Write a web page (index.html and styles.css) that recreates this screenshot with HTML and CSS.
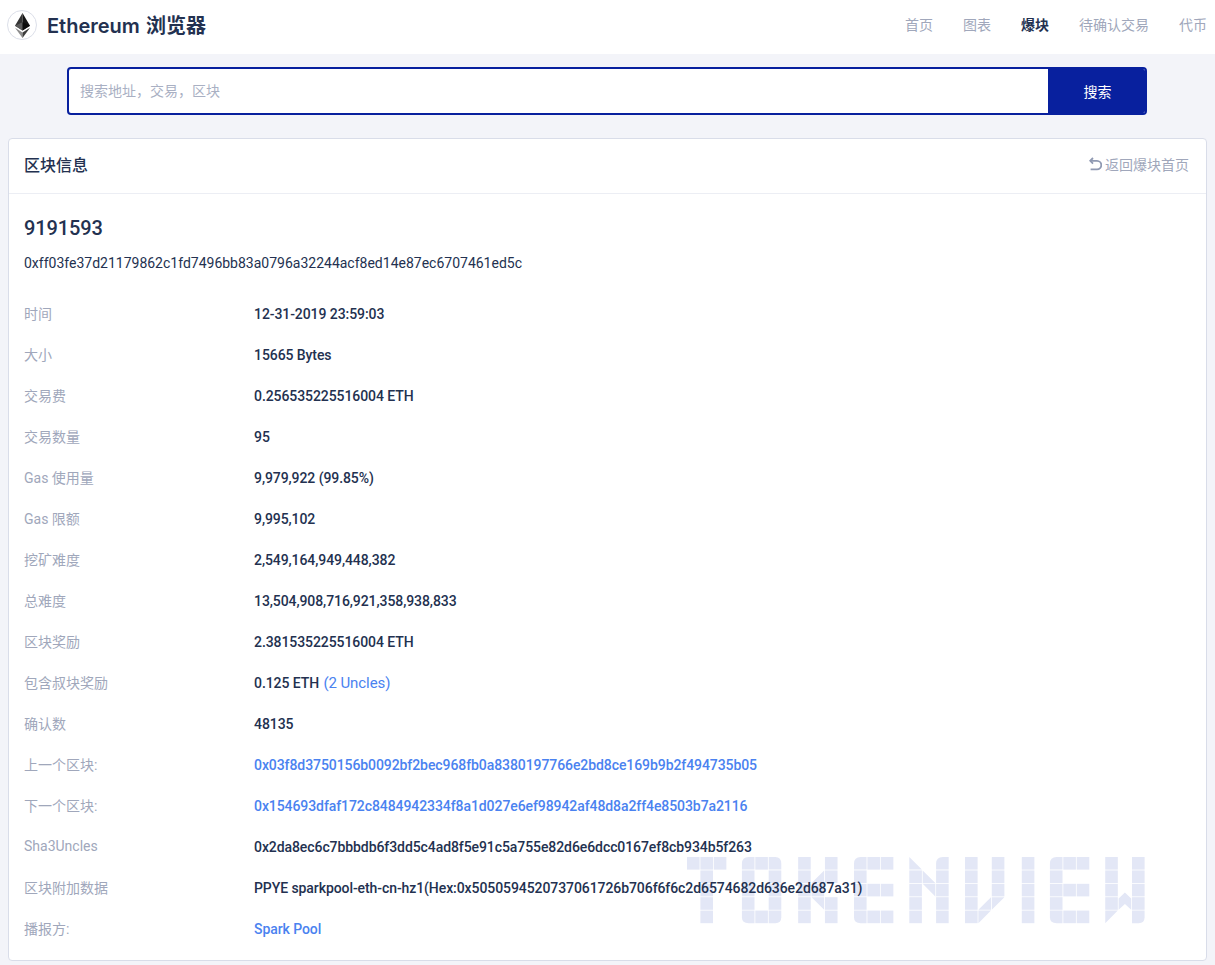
FILE: index.html
```html
<!DOCTYPE html>
<html lang="zh">
<head>
  <meta charset="UTF-8" />
  <meta name="viewport" content="width=device-width, initial-scale=1.0"/>
  <title>Ethereum 浏览器</title>
  <link rel="stylesheet" href="styles.css">
</head>
<body>
  <header class="topbar">
    <div class="brand">
      <div class="brand-logo">
        <svg width="15" height="25" viewBox="0 0 18 30">
          <path fill="#343434" d="M9 0 L0 15.2 L9 21 Z"/>
          <path fill="#141414" d="M9 0 L18 15.2 L9 21 Z"/>
          <path fill="#5a5a5a" d="M0 15.2 L9 11 L9 21 Z"/>
          <path fill="#0b0b0b" d="M18 15.2 L9 11 L9 21 Z"/>
          <path fill="#8c8c8c" d="M0 17.6 L9 30 L9 23.4 Z"/>
          <path fill="#3c3c3b" d="M18 17.6 L9 30 L9 23.4 Z"/>
        </svg>
      </div>
      <span class="brand-name">Ethereum 浏览器</span>
    </div>
    <nav class="nav">
      <a>首页</a>
      <a>图表</a>
      <a class="active">爆块</a>
      <a>待确认交易</a>
      <a>代币</a>
    </nav>
  </header>

  <div class="search">
    <div class="search-input">搜索地址，交易，区块</div>
    <button class="search-btn">搜索</button>
  </div>

  <section class="card">
    <div class="card-head">
      <h2>区块信息</h2>
      <a class="back">
        <svg width="13" height="14" viewBox="0 0 13 14" fill="none" stroke="#8f99b2" stroke-width="1.8">
          <path d="M4 1 L1.2 3.8 L4 6.6"/>
          <path d="M1.4 3.8 H8 A4.2 4.2 0 0 1 8 12.4 H1.6"/>
        </svg>
        返回爆块首页
      </a>
    </div>
    <div class="card-body">
      <div class="block-no">9191593</div>
      <div class="block-hash">0xff03fe37d21179862c1fd7496bb83a0796a32244acf8ed14e87ec6707461ed5c</div>

      <div class="rows">
        <div class="row"><span class="label">时间</span><span class="value">12-31-2019 23:59:03</span></div>
        <div class="row"><span class="label">大小</span><span class="value">15665 Bytes</span></div>
        <div class="row"><span class="label">交易费</span><span class="value">0.256535225516004 ETH</span></div>
        <div class="row"><span class="label">交易数量</span><span class="value">95</span></div>
        <div class="row"><span class="label">Gas 使用量</span><span class="value">9,979,922 (99.85%)</span></div>
        <div class="row"><span class="label">Gas 限额</span><span class="value">9,995,102</span></div>
        <div class="row"><span class="label">挖矿难度</span><span class="value">2,549,164,949,448,382</span></div>
        <div class="row"><span class="label">总难度</span><span class="value">13,504,908,716,921,358,938,833</span></div>
        <div class="row"><span class="label">区块奖励</span><span class="value">2.381535225516004 ETH</span></div>
        <div class="row"><span class="label">包含叔块奖励</span><span class="value">0.125 ETH <a class="link uncles">(2 Uncles)</a></span></div>
        <div class="row"><span class="label">确认数</span><span class="value">48135</span></div>
        <div class="row"><span class="label">上一个区块:</span><span class="value"><a class="link">0x03f8d3750156b0092bf2bec968fb0a8380197766e2bd8ce169b9b2f494735b05</a></span></div>
        <div class="row"><span class="label">下一个区块:</span><span class="value"><a class="link">0x154693dfaf172c8484942334f8a1d027e6ef98942af48d8a2ff4e8503b7a2116</a></span></div>
        <div class="row"><span class="label">Sha3Uncles</span><span class="value">0x2da8ec6c7bbbdb6f3dd5c4ad8f5e91c5a755e82d6e6dcc0167ef8cb934b5f263</span></div>
        <div class="row"><span class="label">区块附加数据</span><span class="value">PPYE sparkpool-eth-cn-hz1(Hex:0x5050594520737061726b706f6f6c2d6574682d636e2d687a31)</span></div>
        <div class="row"><span class="label">播报方:</span><span class="value"><a class="link">Spark Pool</a></span></div>
      </div>
    </div>

    <!-- watermark, sits under the text -->
    <svg class="watermark" width="458" height="67" viewBox="0 0 342 50" fill="#e3e7f6" aria-hidden="true">
      <defs>
        <rect id="c" width="9.4" height="9.4"/>
      </defs>
      <g>
        <use href="#c"/><use href="#c" x="10"/><use href="#c" x="20"/>
        <use href="#c" x="10" y="10"/><use href="#c" x="10" y="20"/><use href="#c" x="10" y="30"/><use href="#c" x="10" y="40"/>
      </g>
      <g transform="translate(41)">
        <path d="M9.4 0V9.4H0V5Q0 0 5 0Z"/><use href="#c" x="10"/><path d="M20 0H25Q29.4 0 29.4 5V9.4H20Z"/>
        <use href="#c" y="10"/><use href="#c" x="20" y="10"/>
        <use href="#c" y="20"/><use href="#c" x="20" y="20"/>
        <use href="#c" y="30"/><use href="#c" x="20" y="30"/>
        <path d="M0 40H9.4V49.4H5Q0 49.4 0 45Z"/><use href="#c" x="10" y="40"/><path d="M20 40H29.4V45Q29.4 49.4 25 49.4H20Z"/>
      </g>
      <g transform="translate(83)">
        <use href="#c"/><use href="#c" x="20"/>
        <use href="#c" y="10"/><path d="M10 19.4L19.4 10V19.4Z"/><use href="#c" x="20" y="10"/>
        <use href="#c" y="20"/><use href="#c" x="10" y="20"/>
        <use href="#c" y="30"/><path d="M10 30H19.4V39.4Z"/><use href="#c" x="20" y="30"/>
        <use href="#c" y="40"/><use href="#c" x="20" y="40"/>
      </g>
      <g transform="translate(124.7)">
        <path d="M9.4 0V9.4H0V5Q0 0 5 0Z"/><use href="#c" x="10"/><use href="#c" x="20"/>
        <use href="#c" y="10"/>
        <use href="#c" y="20"/><use href="#c" x="10" y="20"/><use href="#c" x="20" y="20"/>
        <use href="#c" y="30"/>
        <path d="M0 40H9.4V49.4H5Q0 49.4 0 45Z"/><use href="#c" x="10" y="40"/><use href="#c" x="20" y="40"/>
      </g>
      <g transform="translate(166)">
        <path d="M0 0L9.4 9.4H0Z"/>
        <use href="#c" y="10"/><use href="#c" y="20"/><use href="#c" y="30"/><use href="#c" y="40"/>
        <path d="M10 10L19.4 19.4H10Z"/><path d="M10 20H19.4V29.4Z"/>
        <path d="M25 0H29.4V9.4H20V5Q20 0 25 0Z"/>
        <use href="#c" x="20" y="10"/><use href="#c" x="20" y="20"/><use href="#c" x="20" y="30"/><use href="#c" x="20" y="40"/>
      </g>
      <g transform="translate(207.6)">
        <use href="#c"/><use href="#c" y="10"/><use href="#c" y="20"/><use href="#c" y="30"/><use href="#c" y="40"/>
        <path d="M19.4 30V39.4H10Z"/><path d="M10 40H19.4L10 49.4Z"/>
        <use href="#c" x="20"/><use href="#c" x="20" y="10"/><use href="#c" x="20" y="20"/><path d="M20 30H29.4L20 39.4Z"/>
      </g>
      <g transform="translate(250)">
        <use href="#c"/><use href="#c" y="10"/><use href="#c" y="20"/><use href="#c" y="30"/><use href="#c" y="40"/>
      </g>
      <g transform="translate(271)">
        <path d="M9.4 0V9.4H0V5Q0 0 5 0Z"/><use href="#c" x="10"/><use href="#c" x="20"/>
        <use href="#c" y="10"/>
        <use href="#c" y="20"/><use href="#c" x="10" y="20"/><use href="#c" x="20" y="20"/>
        <use href="#c" y="30"/>
        <path d="M0 40H9.4V49.4H5Q0 49.4 0 45Z"/><use href="#c" x="10" y="40"/><use href="#c" x="20" y="40"/>
      </g>
      <g transform="translate(312.3)">
        <use href="#c"/><use href="#c" y="10"/><use href="#c" y="20"/><use href="#c" y="30"/>
        <path d="M0 40H9.4L0 49.4Z"/>
        <path d="M14.7 26.5L19.4 31V39.4L14.7 35L10 39.4V31Z"/>
        <use href="#c" x="20"/><use href="#c" x="20" y="10"/><use href="#c" x="20" y="20"/><use href="#c" x="20" y="30"/>
        <path d="M20 40H29.4V45Q29.4 49.4 25 49.4H20Z"/>
      </g>
    </svg>
  </section>
</body>
</html>
```

FILE: styles.css
```css
* {
  box-sizing: border-box;
}

body {
  margin: 0;
  height: 965px;
  overflow: hidden;
  background: #f3f4f9;
  color: #233150;
  font-family: Roboto, "Noto Sans CJK SC", sans-serif;
  font-size: 14px;
}

.topbar {
  height: 54px;
  background: #ffffff;
  display: flex;
  justify-content: space-between;
  align-items: center;
  padding: 0 8px 4px 7px;
}

.brand {
  display: flex;
  align-items: center;
  gap: 10px;
}

.brand-logo {
  width: 30px;
  height: 30px;
  border: 1px solid #dcdfe9;
  border-radius: 50%;
  display: flex;
  align-items: center;
  justify-content: center;
}

.brand-name {
  margin-bottom: 2px;
  font-family: Inter, "Noto Sans CJK SC", sans-serif;
  font-size: 20px;
  font-weight: 600;
  word-spacing: 1px;
  color: #233150;
}

.nav {
  display: flex;
  gap: 30px;
  margin-bottom: 2px;
  color: #a0a7bb;
}

.nav .active {
  color: #233150;
  font-weight: 700;
}

.search {
  width: 1080px;
  height: 48px;
  margin: 13px 0 23px 67px;
  display: flex;
  border-radius: 4px;
  overflow: hidden;
  border: 2px solid #08209e;
  background: #ffffff;
}

.search-input {
  flex: 1;
  padding-left: 11px;
  line-height: 44px;
  color: #a9b0c3;
}

.search-btn {
  width: 97px;
  padding: 0 0 0 2px;
  border: none;
  background: #08209e;
  color: #ffffff;
  font: inherit;
}

.card {
  position: relative;
  margin: 0 8px;
  height: 823px;
  background: #ffffff;
  border: 1px solid #d9dde9;
  border-radius: 4px;
}

.card-head {
  height: 55px;
  padding: 0 17px 4px 15px;
  display: flex;
  justify-content: space-between;
  align-items: center;
  border-bottom: 1px solid #eceef4;
}

.card-head h2 {
  margin: 0;
  font-size: 16px;
  font-weight: 500;
}

.back {
  display: flex;
  align-items: center;
  gap: 3px;
  color: #a0a7bb;
}

.card-body {
  position: relative;
  z-index: 1;
  padding: 20px 15px 0;
}

.block-no {
  font-size: 20px;
  font-weight: 500;
  line-height: 28px;
  letter-spacing: -0.1px;
}

.block-hash {
  margin-top: 11px;
  line-height: 20px;
}

.rows {
  margin-top: 20px;
}

.row {
  display: flex;
  height: 41px;
  align-items: center;
}

.label {
  width: 230px;
  margin-bottom: 2px;
  color: #a0a7bb;
}

.value {
  font-weight: 500;
  letter-spacing: -0.08px;
}

.link {
  color: #4a82f0;
}

.uncles {
  margin-left: 1px;
  font-size: 15px;
  font-weight: 400;
}

.watermark {
  position: absolute;
  left: 678px;
  top: 718px;
}
```
